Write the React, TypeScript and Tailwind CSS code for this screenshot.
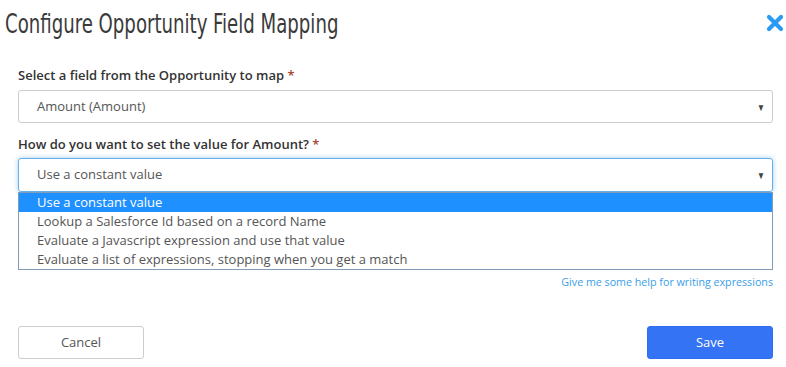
import React from 'react'

const options = [
  'Use a constant value',
  'Lookup a Salesforce Id based on a record Name',
  'Evaluate a Javascript expression and use that value',
  'Evaluate a list of expressions, stopping when you get a match',
]

function Caret() {
  return <span className="text-[10px] leading-none text-[#444] scale-x-[0.8]">▼</span>
}

export default function App() {
  return (
    <div className="w-[786px] h-[367px] bg-white text-[#333] font-['Open_Sans',sans-serif] overflow-hidden">
      {/* Header */}
      <div className="flex items-start justify-between pl-[5px] pr-[2px] pt-[8px] h-[56px]">
        <h1 className="inline-block origin-left scale-x-[0.775] whitespace-nowrap text-[26px] leading-[32px] text-[#3a3a3a] font-['DejaVu_Sans_Condensed',sans-serif]">
          Configure Opportunity Field Mapping
        </h1>
        <svg width="18" height="18" viewBox="0 0 18 18" className="mt-[6px]">
          <path d="M3 3 L15 15 M15 3 L3 15" stroke="#2b9af3" strokeWidth="4.2" strokeLinecap="round" />
        </svg>
      </div>

      <div className="px-[18px] pr-[13px] text-[13px]">
        {/* Field select */}
        <label className="block font-semibold leading-[18px] mt-[10px]">
          Select a field from the Opportunity to map <span className="text-[#a94432]">*</span>
        </label>
        <div className="mt-[6px] h-[33px] border border-[#ccc] rounded-[3px] flex items-center justify-between pl-[18px] pr-[6px] text-[#555]">
          <span>Amount (Amount)</span>
          <Caret />
        </div>

        {/* Value mode */}
        <label className="block font-semibold leading-[18px] mt-[12px]">
          How do you want to set the value for Amount? <span className="text-[#a94432]">*</span>
        </label>
        <div className="relative mt-[5px]">
          <div className="h-[34px] border border-[#66afe9] rounded-[3px] shadow-[0_0_5px_rgba(102,175,233,0.6)] flex items-center justify-between pl-[18px] pr-[6px] text-[#555]">
            <span>Use a constant value</span>
            <Caret />
          </div>
          <ul className="border border-[#7f9db9] bg-white">
            {options.map((o, i) => (
              <li
                key={o}
                className={`h-[19px] leading-[19px] pl-[18px] ${i === 0 ? 'bg-[#1e90ff] text-white' : 'text-[#555]'}`}
              >
                {o}
              </li>
            ))}
          </ul>
        </div>

        <div className="flex justify-end mt-[4px]">
          <a className="text-[10.7px] leading-[16px] text-[#3a9ee8]">Give me some help for writing expressions</a>
        </div>

        {/* Actions */}
        <div className="flex justify-between mt-[36px]">
          <button className="w-[126px] h-[33px] border border-[#ccc] rounded-[3px] text-[#555] bg-white">Cancel</button>
          <button className="w-[126px] h-[33px] border border-[#2f6ef2] rounded-[3px] text-white bg-[#3473f4]">Save</button>
        </div>
      </div>
    </div>
  )
}
